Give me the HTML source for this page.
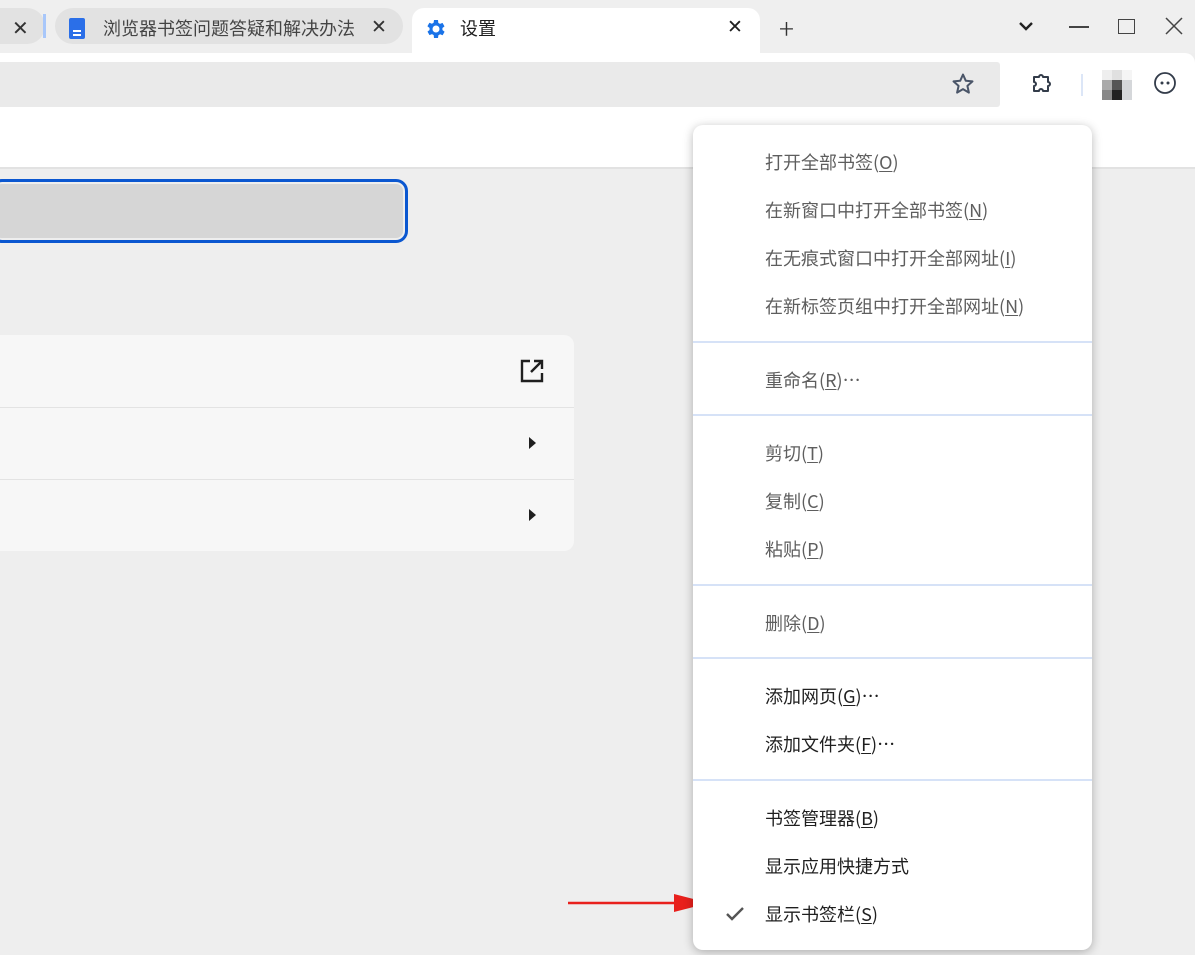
<!DOCTYPE html>
<html><head><meta charset="utf-8"><style>
*{margin:0;padding:0;box-sizing:border-box}
body{width:1195px;height:955px;overflow:hidden;background:#eeeeee;font-family:"Noto Sans CJK SC","Liberation Sans",sans-serif;position:relative}
.abs{position:absolute}
.menu{left:693px;top:125px;width:399px;height:825px;background:#fff;border-radius:10px;box-shadow:0 2px 10px rgba(0,0,0,.28)}
.it{position:absolute;left:72px;font-size:18px;line-height:24px;white-space:nowrap}
.g{color:#5e5e5e}.d{color:#1f1f1f}
.sep{position:absolute;left:0;right:0;height:2px;background:#d6e2f7}
u{text-underline-offset:2px}
</style></head><body>
<div class="abs" style="left:0;top:0;width:1195px;height:53px;background:#efefef"></div>
<div class="abs" style="left:0;top:8px;width:45px;height:36px;background:#e2e2e2;border-radius:0 18px 18px 0"></div>
<div class="abs" style="left:12px;top:12px;font-size:20px;color:#333">✕</div>
<div class="abs" style="left:43px;top:14px;width:3px;height:24px;background:#a8c7fa"></div>
<div class="abs" style="left:55px;top:8px;width:348px;height:36px;background:#e2e2e2;border-radius:18px"></div>
<div class="abs" style="left:69px;top:18px;width:16px;height:21px;background:#2b6fe8;border-radius:2px"></div>
<div class="abs" style="left:73px;top:30px;width:8px;height:2px;background:#fff"></div>
<div class="abs" style="left:73px;top:34px;width:8px;height:2px;background:#fff"></div>
<div class="abs" style="left:103px;top:15px;font-size:18px;line-height:26px;color:#444">浏览器书签问题答疑和解决办法</div>
<div class="abs" style="left:371px;top:12px;font-size:19px;color:#333">✕</div>
<div class="abs" style="left:412px;top:8px;width:348px;height:50px;background:#fff;border-radius:12px 12px 0 0"></div>
<svg class="abs" style="left:424px;top:17px" width="24" height="24" viewBox="0 0 24 24"><path fill="#1a73e8" d="M19.4 13a7.5 7.5 0 000-2l2.1-1.6-2-3.5-2.5 1a7 7 0 00-1.7-1L15 3h-4l-.4 2.7a7 7 0 00-1.7 1l-2.5-1-2 3.5L6.6 11a7.5 7.5 0 000 2l-2.1 1.6 2 3.5 2.5-1a7 7 0 001.7 1L11 21h4l.4-2.7a7 7 0 001.7-1l2.5 1 2-3.5zM13 15.5a3.5 3.5 0 110-7 3.5 3.5 0 010 7z" transform="translate(-1 0)"/></svg>
<div class="abs" style="left:460px;top:15px;font-size:18px;line-height:26px;color:#1f1f1f">设置</div>
<div class="abs" style="left:727px;top:12px;font-size:19px;color:#1f1f1f">✕</div>
<div class="abs" style="left:779px;top:8px;font-size:28px;color:#333;font-weight:300">+</div>
<svg class="abs" style="left:1018px;top:20px" width="16" height="12"><path d="M2 3l6 6 6-6" stroke="#222" stroke-width="2.4" fill="none"/></svg>
<div class="abs" style="left:1069px;top:26px;width:20px;height:1.5px;background:#444"></div>
<div class="abs" style="left:1118px;top:19px;width:17px;height:15px;border:1.5px solid #444"></div>
<svg class="abs" style="left:1165px;top:17px" width="18" height="18"><path d="M1 1l16 16M17 1L1 17" stroke="#444" stroke-width="1.5"/></svg>
<div class="abs" style="left:0;top:53px;width:1195px;height:114px;background:#fff;border-radius:0 10px 0 0"></div>
<div class="abs" style="left:0;top:167px;width:1195px;height:2px;background:#e2e2e2"></div>
<div class="abs" style="left:0;top:62px;width:1000px;height:45px;background:#eaeaea;border-radius:0 3px 3px 0"></div>
<svg class="abs" style="left:951px;top:72px" width="24" height="24" viewBox="0 0 24 24"><path d="M12 2.5l2.8 6.3 6.7.6-5.1 4.5 1.5 6.7L12 17.1l-5.9 3.5 1.5-6.7L2.5 9.4l6.7-.6z" fill="none" stroke="#4a5568" stroke-width="2" stroke-linejoin="round"/></svg>
<svg class="abs" style="left:1030px;top:72px" width="24" height="24" viewBox="0 0 24 24"><path d="M4 5h5a2 2 0 014 0h5v5a2 2 0 010 4v5H13a2 2 0 00-4 0H4v-5a2 2 0 000-4z" fill="none" stroke="#333c4a" stroke-width="2" stroke-linejoin="round"/></svg>
<div class="abs" style="left:1081px;top:74px;width:2px;height:22px;background:#dce6f7"></div>
<div class="abs" style="left:1102px;top:70px;width:30px;height:30px;display:grid;grid-template-columns:repeat(3,10px)">
<div style="background:#eee"></div><div style="background:#e0e0e0"></div><div style="background:#f5f5f5"></div>
<div style="background:#aaa"></div><div style="background:#555"></div><div style="background:#d5d7da"></div>
<div style="background:#888"></div><div style="background:#222"></div><div style="background:#d5d7da"></div></div>
<svg class="abs" style="left:1153px;top:71px" width="24" height="24"><circle cx="12" cy="12" r="10" fill="none" stroke="#333c4a" stroke-width="1.8"/><circle cx="9" cy="12" r="1.5" fill="#333c4a"/><circle cx="15" cy="12" r="1.5" fill="#333c4a"/></svg>
<div class="abs" style="left:-10px;top:179px;width:418px;height:64px;border:3px solid #0b57d0;border-radius:12px;background:#d6d6d6;box-shadow:inset 0 0 0 2px #eee"></div>
<div class="abs" style="left:-10px;top:335px;width:584px;height:216px;background:#f7f7f7;border-radius:10px"></div>
<div class="abs" style="left:0;top:407px;width:574px;height:1px;background:#e3e3e3"></div>
<div class="abs" style="left:0;top:479px;width:574px;height:1px;background:#e3e3e3"></div>
<svg class="abs" style="left:519px;top:358px" width="26" height="26" viewBox="0 0 26 26"><path d="M11 3H3v20h20v-8M15 3h8v8M23 3L12 14" fill="none" stroke="#1f1f1f" stroke-width="2.4"/></svg>
<svg class="abs" style="left:528px;top:436px" width="10" height="14"><path d="M1 1l7 6-7 6z" fill="#1f1f1f"/></svg>
<svg class="abs" style="left:528px;top:508px" width="10" height="14"><path d="M1 1l7 6-7 6z" fill="#1f1f1f"/></svg>
<svg class="abs" style="left:566px;top:890px" width="145" height="26"><path d="M2 13H112" stroke="#e8201c" stroke-width="2.5"/><path d="M108 4L143 13 108 22z" fill="#e8201c"/></svg>
<div class="abs menu">
<div class="it g" style="top:25px">打开全部书签(<u>O</u>)</div>
<div class="it g" style="top:73px">在新窗口中打开全部书签(<u>N</u>)</div>
<div class="it g" style="top:121px">在无痕式窗口中打开全部网址(<u>I</u>)</div>
<div class="it g" style="top:169px">在新标签页组中打开全部网址(<u>N</u>)</div>
<div class="sep" style="top:216px"></div>
<div class="it g" style="top:243px">重命名(<u>R</u>)…</div>
<div class="sep" style="top:289px"></div>
<div class="it g" style="top:316px">剪切(<u>T</u>)</div>
<div class="it g" style="top:364px">复制(<u>C</u>)</div>
<div class="it g" style="top:412px">粘贴(<u>P</u>)</div>
<div class="sep" style="top:459px"></div>
<div class="it g" style="top:486px">删除(<u>D</u>)</div>
<div class="sep" style="top:532px"></div>
<div class="it d" style="top:559px">添加网页(<u>G</u>)…</div>
<div class="it d" style="top:607px">添加文件夹(<u>F</u>)…</div>
<div class="sep" style="top:654px"></div>
<div class="it d" style="top:681px">书签管理器(<u>B</u>)</div>
<div class="it d" style="top:729px">显示应用快捷方式</div>
<svg class="abs" style="left:32px;top:781px" width="20" height="16"><path d="M2 8l5 5 11-11" fill="none" stroke="#555" stroke-width="2.4"/></svg>
<div class="it d" style="top:777px">显示书签栏(<u>S</u>)</div>
</div>
</body></html>
